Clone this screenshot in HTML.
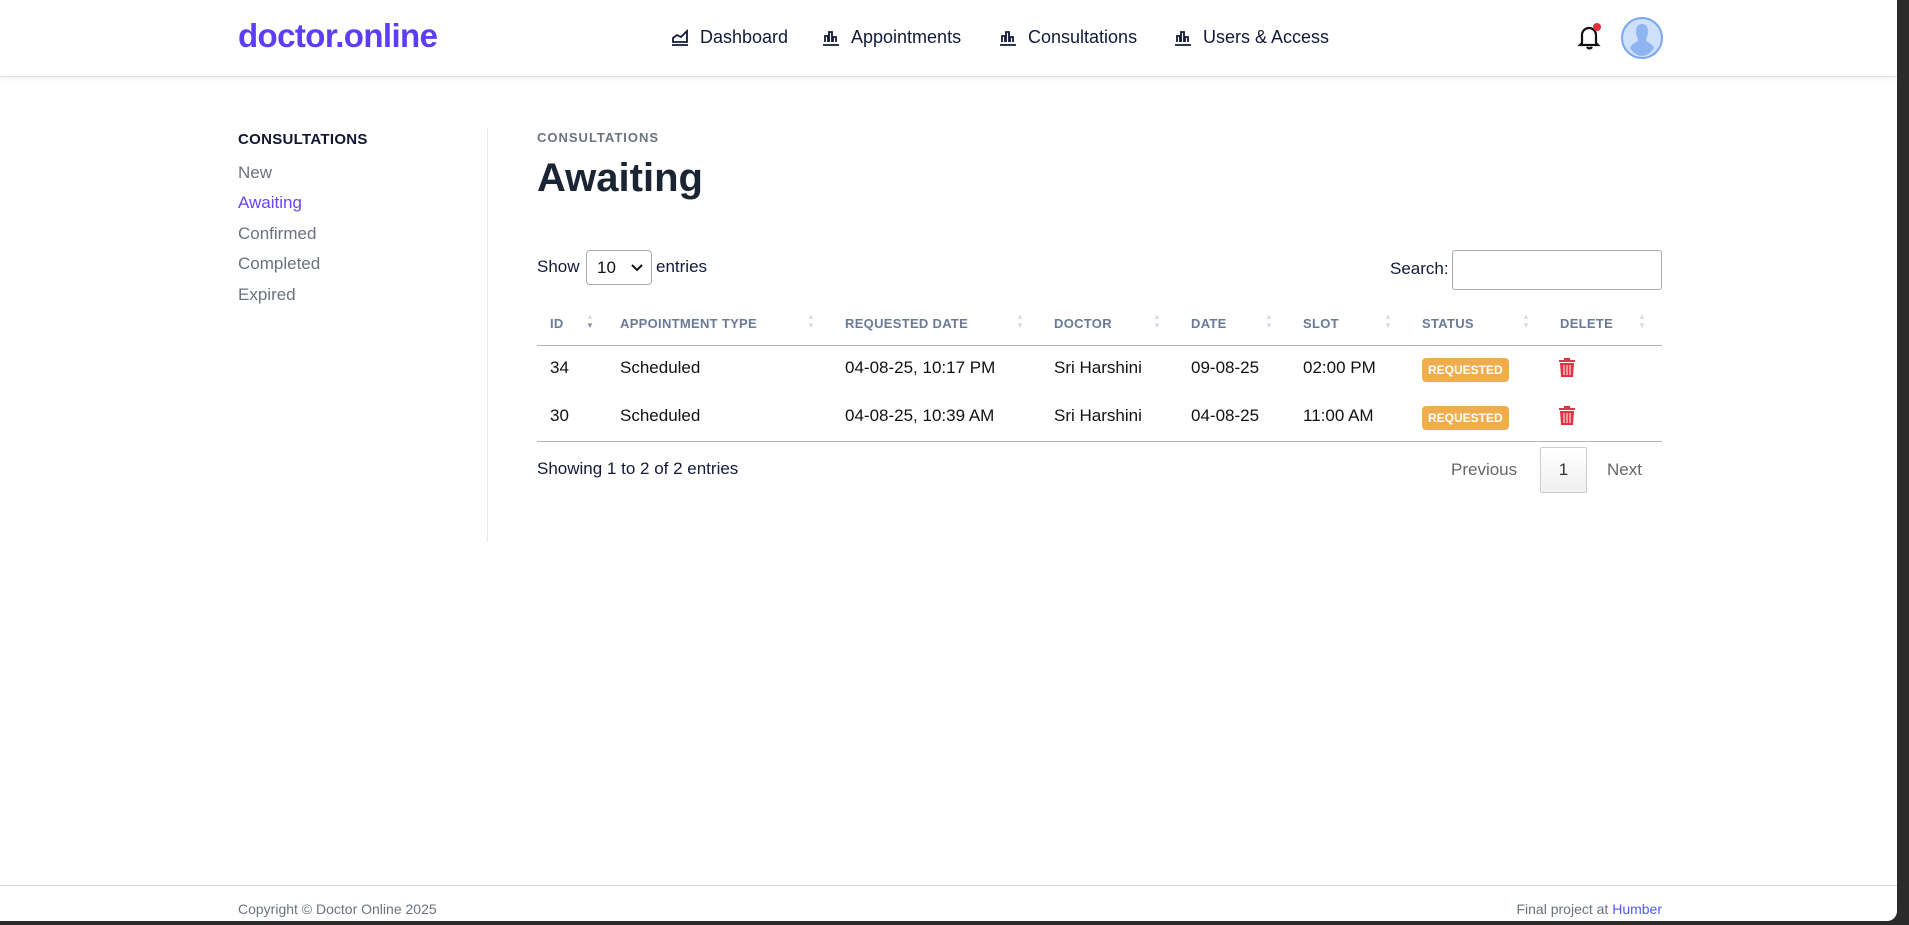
<!DOCTYPE html>
<html><head><meta charset="utf-8"><style>
*{box-sizing:border-box;margin:0;padding:0}
html,body{width:1909px;height:925px;overflow:hidden;background:#2b2b2b;font-family:"Liberation Sans",Arial,sans-serif}
#page{position:absolute;left:0;top:0;width:1897px;height:921px;background:#fff;border-bottom-right-radius:10px;overflow:hidden}
.a{position:absolute;white-space:nowrap}
header{position:absolute;left:0;top:0;width:1897px;height:77px;background:#fff;border-bottom:1px solid #e3e3e3;box-shadow:0 2px 8px rgba(0,0,0,.06)}
.logo{left:238px;top:17px;font-size:33px;font-weight:bold;color:#5b3ff8;letter-spacing:-0.6px}
.nav{top:27px;font-size:18px;color:#111a3a;font-weight:500}
.nav svg{position:absolute;left:-30px;top:2px}
.side{left:238px;font-size:17px;color:#6b7280}
.th{top:316px;font-size:13px;font-weight:bold;color:#6b7a99;letter-spacing:.3px}
.td{font-size:17px;color:#111}
.badge{background:#f0ad4e;color:#fff;font-size:12px;font-weight:bold;padding:5px 6px;border-radius:4px}
.sort{position:absolute;font-size:8px;color:#d8dce4;line-height:9px}
</style></head><body><div id="page">
<header>
<div class="a logo">doctor.online</div>
<div class="a nav" style="left:700px"><svg width="20" height="18" viewBox="0 0 20 18" fill="none" stroke="#111a3a" stroke-width="1.8"><path d="M2 16h16M3 13V9l4-3 4 2 6-6v11z"/></svg>Dashboard</div>
<div class="a nav" style="left:851px"><svg width="20" height="18" viewBox="0 0 20 18" fill="none" stroke="#111a3a" stroke-width="1.8"><path d="M2 16h16M4 13V7h3v6M8 13V3h3v10M12 13V8h3v5"/></svg>Appointments</div>
<div class="a nav" style="left:1028px"><svg width="20" height="18" viewBox="0 0 20 18" fill="none" stroke="#111a3a" stroke-width="1.8"><path d="M2 16h16M4 13V7h3v6M8 13V3h3v10M12 13V8h3v5"/></svg>Consultations</div>
<div class="a nav" style="left:1203px"><svg width="20" height="18" viewBox="0 0 20 18" fill="none" stroke="#111a3a" stroke-width="1.8"><path d="M2 16h16M4 13V7h3v6M8 13V3h3v10M12 13V8h3v5"/></svg>Users &amp; Access</div>
<svg class="a" style="left:1577px;top:22px" width="26" height="30" viewBox="0 0 26 30" fill="none" stroke="#111" stroke-width="2.2"><path d="M5 21V13a7 7 0 0 1 14 0v8l2 2H3z M10 25a3 3 0 0 0 5 0"/><circle cx="20" cy="5" r="4" fill="#e0303a" stroke="none"/></svg>
<svg class="a" style="left:1621px;top:17px" width="42" height="42" viewBox="0 0 42 42"><circle cx="21" cy="21" r="20" fill="#cfe0fb" stroke="#7aa7ee" stroke-width="2"/><path d="M21 7c5 0 6 4 6 8s-2 6-2 8 6 3 8 8c-3 5-8 8-12 8s-9-3-12-8c2-5 8-6 8-8s-2-4-2-8 1-8 6-8z" fill="#8fb5f0"/></svg>
</header>
<div class="a" style="left:238px;top:131px;font-size:15px;font-weight:bold;color:#0f1533;letter-spacing:.3px">CONSULTATIONS</div>
<div class="a side" style="top:163px">New</div>
<div class="a side" style="top:193px;color:#6a45f5">Awaiting</div>
<div class="a side" style="top:224px">Confirmed</div>
<div class="a side" style="top:254px">Completed</div>
<div class="a side" style="top:285px">Expired</div>
<div class="a" style="left:487px;top:128px;width:1px;height:414px;background:#e5e7eb"></div>
<div class="a" style="left:537px;top:130px;font-size:13px;font-weight:bold;color:#6b7280;letter-spacing:1px">CONSULTATIONS</div>
<div class="a" style="left:537px;top:156px;font-size:40px;font-weight:bold;color:#1b2433">Awaiting</div>
<div class="a" style="left:537px;top:257px;font-size:17px;color:#111a3a">Show</div>
<div class="a" style="left:586px;top:250px;width:66px;height:35px;border:1px solid #aaa;border-radius:4px;font-size:17px;padding:7px 10px;color:#111">10<svg style="position:absolute;right:8px;top:13px" width="12" height="8" viewBox="0 0 12 8" fill="none" stroke="#111" stroke-width="2"><path d="M1 1l5 5 5-5"/></svg></div>
<div class="a" style="left:656px;top:257px;font-size:17px;color:#111a3a">entries</div>
<div class="a" style="left:1390px;top:259px;font-size:17px;color:#111a3a">Search:</div>
<div class="a" style="left:1452px;top:250px;width:210px;height:40px;border:1px solid #aaa;border-radius:3px"></div>
<div class="a th" style="left:550px">ID</div>
<div class="a th" style="left:620px">APPOINTMENT TYPE</div>
<div class="a th" style="left:845px">REQUESTED DATE</div>
<div class="a th" style="left:1054px">DOCTOR</div>
<div class="a th" style="left:1191px">DATE</div>
<div class="a th" style="left:1303px">SLOT</div>
<div class="a th" style="left:1422px">STATUS</div>
<div class="a th" style="left:1560px">DELETE</div>
<div class="sort" style="left:586px;top:312px">▲<br><span style="color:#8a93a8">▼</span></div>
<div class="sort" style="left:807px;top:312px">▲<br>▼</div>
<div class="sort" style="left:1016px;top:312px">▲<br>▼</div>
<div class="sort" style="left:1153px;top:312px">▲<br>▼</div>
<div class="sort" style="left:1265px;top:312px">▲<br>▼</div>
<div class="sort" style="left:1384px;top:312px">▲<br>▼</div>
<div class="sort" style="left:1522px;top:312px">▲<br>▼</div>
<div class="sort" style="left:1638px;top:312px">▲<br>▼</div>
<div class="a" style="left:537px;top:345px;width:1125px;height:1px;background:#b5b5b5"></div>
<div class="a td" style="left:550px;top:358px">34</div>
<div class="a td" style="left:620px;top:358px">Scheduled</div>
<div class="a td" style="left:845px;top:358px">04-08-25, 10:17 PM</div>
<div class="a td" style="left:1054px;top:358px">Sri Harshini</div>
<div class="a td" style="left:1191px;top:358px">09-08-25</div>
<div class="a td" style="left:1303px;top:358px">02:00 PM</div>
<div class="a badge" style="left:1422px;top:358px">REQUESTED</div>
<div class="a td" style="left:550px;top:406px">30</div>
<div class="a td" style="left:620px;top:406px">Scheduled</div>
<div class="a td" style="left:845px;top:406px">04-08-25, 10:39 AM</div>
<div class="a td" style="left:1054px;top:406px">Sri Harshini</div>
<div class="a td" style="left:1191px;top:406px">04-08-25</div>
<div class="a td" style="left:1303px;top:406px">11:00 AM</div>
<div class="a badge" style="left:1422px;top:406px">REQUESTED</div>
<svg class="a" style="left:1559px;top:358px" width="16" height="19" viewBox="0 0 16 19" fill="#dc3545"><path d="M5 0h6v2h5v2H0V2h5zM1 5h14l-1 14H2z"/><path d="M5 7v10M8 7v10M11 7v10" stroke="#fff" stroke-width="1"/></svg>
<svg class="a" style="left:1559px;top:406px" width="16" height="19" viewBox="0 0 16 19" fill="#dc3545"><path d="M5 0h6v2h5v2H0V2h5zM1 5h14l-1 14H2z"/><path d="M5 7v10M8 7v10M11 7v10" stroke="#fff" stroke-width="1"/></svg>
<div class="a" style="left:537px;top:441px;width:1125px;height:1px;background:#b5b5b5"></div>
<div class="a" style="left:537px;top:459px;font-size:17px;color:#111a3a">Showing 1 to 2 of 2 entries</div>
<div class="a" style="left:1451px;top:460px;font-size:17px;color:#666">Previous</div>
<div class="a" style="left:1540px;top:447px;width:47px;height:46px;border:1px solid #ccc;border-radius:2px;background:linear-gradient(#fff,#f0f0f0);font-size:17px;color:#333;text-align:center;line-height:44px">1</div>
<div class="a" style="left:1607px;top:460px;font-size:17px;color:#666">Next</div>
<div class="a" style="left:0;top:885px;width:1897px;height:1px;background:#d4d4dc"></div>
<div class="a" style="left:238px;top:901px;font-size:14px;color:#6b7280">Copyright © Doctor Online 2025</div>
<div class="a" style="right:235px;top:901px;font-size:14px;color:#6b7280">Final project at <span style="color:#4e5cf5">Humber</span></div>
</div></body></html>
